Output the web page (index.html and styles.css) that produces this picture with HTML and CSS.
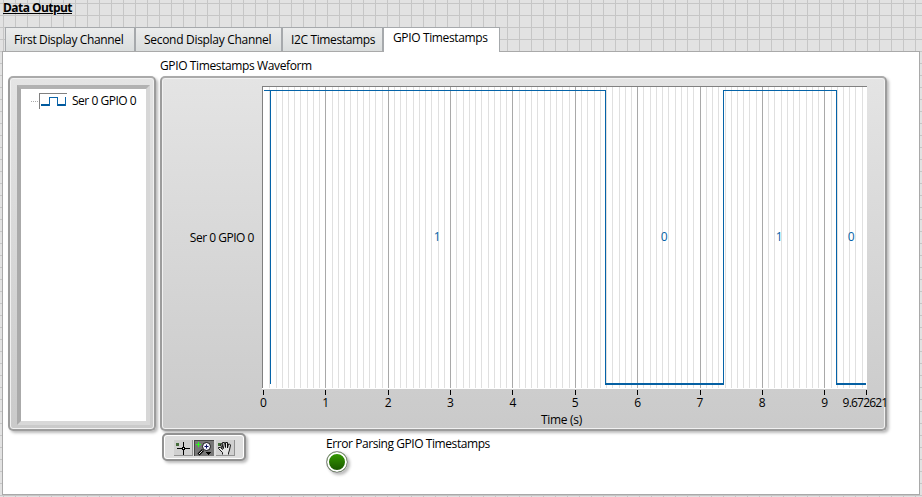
FILE: index.html
```
<!DOCTYPE html>
<html lang="en">
<head>
<meta charset="utf-8">
<title>Data Output</title>
<link rel="stylesheet" href="styles.css">
</head>
<body>
<h1 class="heading">Data Output</h1>
<nav class="tabs">
  <div class="tab first">First Display Channel</div>
  <div class="tab second">Second Display Channel</div>
  <div class="tab third">I2C Timestamps</div>
  <div class="tab active">GPIO Timestamps</div>
</nav>
<main class="page">
  <h2 class="title">GPIO Timestamps Waveform</h2>
  <div class="row">
    <section class="frame tree">
      <div class="well">
        <div class="item">
          <svg class="glyph" width="37" height="18" shape-rendering="crispEdges">
            <path d="M0 9.5H8" stroke="#aaa" stroke-dasharray="1 1"/>
            <path d="M8.5 17V1.5H36" fill="none" stroke="#808080"/>
            <path d="M10 13H18M26 13H34" stroke="#005a9e" stroke-width="2"/>
            <path d="M18.5 14V5.5H26.5V14M34.5 14V5" fill="none" stroke="#0c65a9"/>
          </svg>
          <span>Ser 0 GPIO 0</span>
        </div>
      </div>
    </section>
    <section class="frame graph">
      <div class="ylabel">Ser 0 GPIO 0</div>
      <div class="chart">
        <svg class="plot" width="605" height="309" shape-rendering="crispEdges">
          <rect width="605" height="303" fill="#fff"/>
          <path id="minor" stroke="#e0e0e0"/>
          <path id="major" stroke="#a9a9a9"/>
          <path d="M.5 302V.5H605" fill="none" stroke="#808080"/>
          <path d="M2 4.5H343.5V297M8.5 4V298M461.5 298V4.5H574.5V298" fill="none" stroke="#0563a8"/>
          <path d="M343 298H462M574 298H604" stroke="#0560a3" stroke-width="2"/>
          <path id="ticks" stroke="#000"/>
          <g class="values"><text x="175" y="155">1</text><text x="402" y="155">0</text><text x="517" y="155">1</text><text x="589" y="155">0</text></g>
        </svg>
        <div class="scale"><span>0</span><span>1</span><span>2</span><span>3</span><span>4</span><span>5</span><span>6</span><span>7</span><span>8</span><span>9</span><span class="end">9.672621</span></div>
        <div class="xlabel">Time (s)</div>
      </div>
    </section>
  </div>
  <div class="footer">
    <div class="palette">
      <svg width="61" height="16" shape-rendering="crispEdges">
        <rect width="19" height="16" fill="#d0d0d0"/><path d="M18.5 0V15.5H0" fill="none" stroke="#929292"/>
        <rect x="2" y="3" width="3" height="3" fill="#466c3c"/>
        <path d="M3 8.5H8M11 8.5H16M9.5 2V7M9.5 10V15" stroke="#000"/><path d="M8.5 7.5h2v2h-2z" fill="#fff" stroke="#000"/>
        <rect x="20" width="20" height="16" fill="#777"/><path d="M20.5 16V.5H40" fill="none" stroke="#444"/>
        <path d="M22 4.500h5M24.500 2v5" stroke="#29ff19" stroke-width="1.500"/>
        <g shape-rendering="auto"><path d="M29 10L24.500 14.500" stroke="#000" stroke-width="2.800"/><path d="M28.500 10.500L25 14" stroke="#ddd"/><circle cx="32.500" cy="6.500" r="4" fill="#f4f4ff" stroke="#111"/><path d="M30.500 6.500h4M32.500 4.500v4" stroke="#0a1060"/></g>
        <path d="M32 12h5v1h-1v1h-1v1h-1v-1h-1v-1h-1z" fill="#000"/>
        <rect x="42" width="19" height="16" fill="#d0d0d0"/><path d="M60.500 0V15.500H42" fill="none" stroke="#929292"/>
        <rect x="44" y="3" width="3" height="3" fill="#466c3c"/>
        <path d="M48.500 14.500v-2l-4-4v-1h2l2 2-2-5 1-1 2 5-1-6h2l1 5V2.500h2V8l1-4h1l1 1-1 5-1 3v1.500" fill="#e4e4e4" stroke="#000" stroke-width=".9" shape-rendering="auto"/>
      </svg>
    </div>
    <div class="status">
      <div>Error Parsing GPIO Timestamps</div>
      <div class="led"></div>
    </div>
  </div>
</main>
<script src="script.js"></script>
</body>
</html>
```
FILE: styles.css
```
body {
  margin: 0;
  height: 497px;
  overflow: hidden;
  font: 12px/16px "Open Sans", sans-serif;
  letter-spacing: -0.36px;
  color: #000;
  background:
    linear-gradient(90deg, transparent 3px, #c6c6c6 3px, #c6c6c6 4px, transparent 4px) 0 0 / 12px 12px,
    linear-gradient(transparent 3px, #c6c6c6 3px, #c6c6c6 4px, transparent 4px) 0 0 / 12px 12px #e2e2e2;
}
h1, h2 { margin: 0; font-size: 12px; }
.heading { height: 27px; padding-left: 3px; font-weight: 700; letter-spacing: -0.55px; text-decoration: underline; }
.tabs { display: flex; height: 24px; padding-left: 5px; white-space: nowrap; }
.tab { box-sizing: border-box; border: 1px solid #a6a9ac; border-bottom: 0; padding: 4px 0 0 8px; background: linear-gradient(#ebecec, #dadddd); }
.first { width: 130px; }
.second { width: 147px; letter-spacing: -0.3px; }
.third { width: 101px; }
.active { position: relative; width: 117px; height: 25px; padding-top: 2px; padding-left: 9px; background: #fff; }
.page { box-sizing: border-box; width: 918px; height: 444px; margin-left: 2px; border: 1px solid #a9a9a9; background: #fff; }
.title { height: 24px; padding: 6px 0 0 157px; box-sizing: border-box; font-weight: 400; letter-spacing: -0.38px; }
.row { display: flex; gap: 4px; padding-left: 5px; letter-spacing: -0.48px; }
.frame { box-sizing: border-box; height: 355px; border: 2px solid #9c9c9c; border-top-color: #aaa; border-radius: 5px; background: linear-gradient(#e4e4e4, #cacaca); box-shadow: inset 0 0 0 1px #f1f1f1, 2px 2px 3px #bbb; }
.tree { width: 148px; padding: 7px 4px 4px 7px; }
.well { box-sizing: border-box; height: 340px; border: 4px solid; border-color: #b2b2b2 #d7d7d7 #d8d8d8 #aaa; background: #fff; }
.item { display: flex; align-items: center; gap: 4px; height: 18px; padding: 3px 0 0 10px; white-space: nowrap; }
.graph { display: flex; width: 727px; padding-top: 8px; }
.ylabel { width: 100px; padding: 144px 8px 0 0; box-sizing: border-box; text-align: right; }
.chart { width: 605px; }
.plot { display: block; }
.values { font-size: 12px; fill: #0563a8; text-anchor: middle; }
.scale { display: grid; grid-template-columns: repeat(10, 62.36px) 1fr; height: 16px; margin-left: -30px; width: 655px; text-align: center; }
.end { margin-left: -13px; letter-spacing: -0.8px; }
.xlabel { margin-top: 1px; padding-right: 6px; text-align: center; letter-spacing: -0.3px; }
.footer { display: flex; padding: 2px 0 0 159px; }
.palette { box-sizing: border-box; width: 84px; height: 28px; padding: 5px 0 0 10px; border: 2px solid #929292; border-radius: 5px; background: #dedede; box-shadow: inset 0 0 0 1px #fff, 2px 2px 3px #bbb; }
.palette svg { display: block; }
.status { margin-left: 80px; padding-top: 3px; white-space: nowrap; letter-spacing: -0.43px; }
.led { box-sizing: border-box; width: 22px; height: 22px; margin-top: -1px; border: 1px solid #8b8b8b; border-radius: 50%; background: linear-gradient(#37a000, #175000); box-shadow: inset 0 0 0 2px #fff, 2px 2px 3px #bbb; }
```
FILE: script.js
```
let minor = "", major = "", ticks = "";
for (let i = 1; i < 97; i++) {
  const x = Math.round(1.05 + i * 6.236) + 0.5;
  if (i % 10) minor += `M${x} 1V302`;
  else major += `M${x} 1V302`;
}
for (let i = 0; i < 10; i++) ticks += `M${Math.round(1.05 + i * 62.36) + 0.5} 304V309`;
ticks += "M604.5 304V309";
document.getElementById("minor").setAttribute("d", minor);
document.getElementById("major").setAttribute("d", major);
document.getElementById("ticks").setAttribute("d", ticks);
```
